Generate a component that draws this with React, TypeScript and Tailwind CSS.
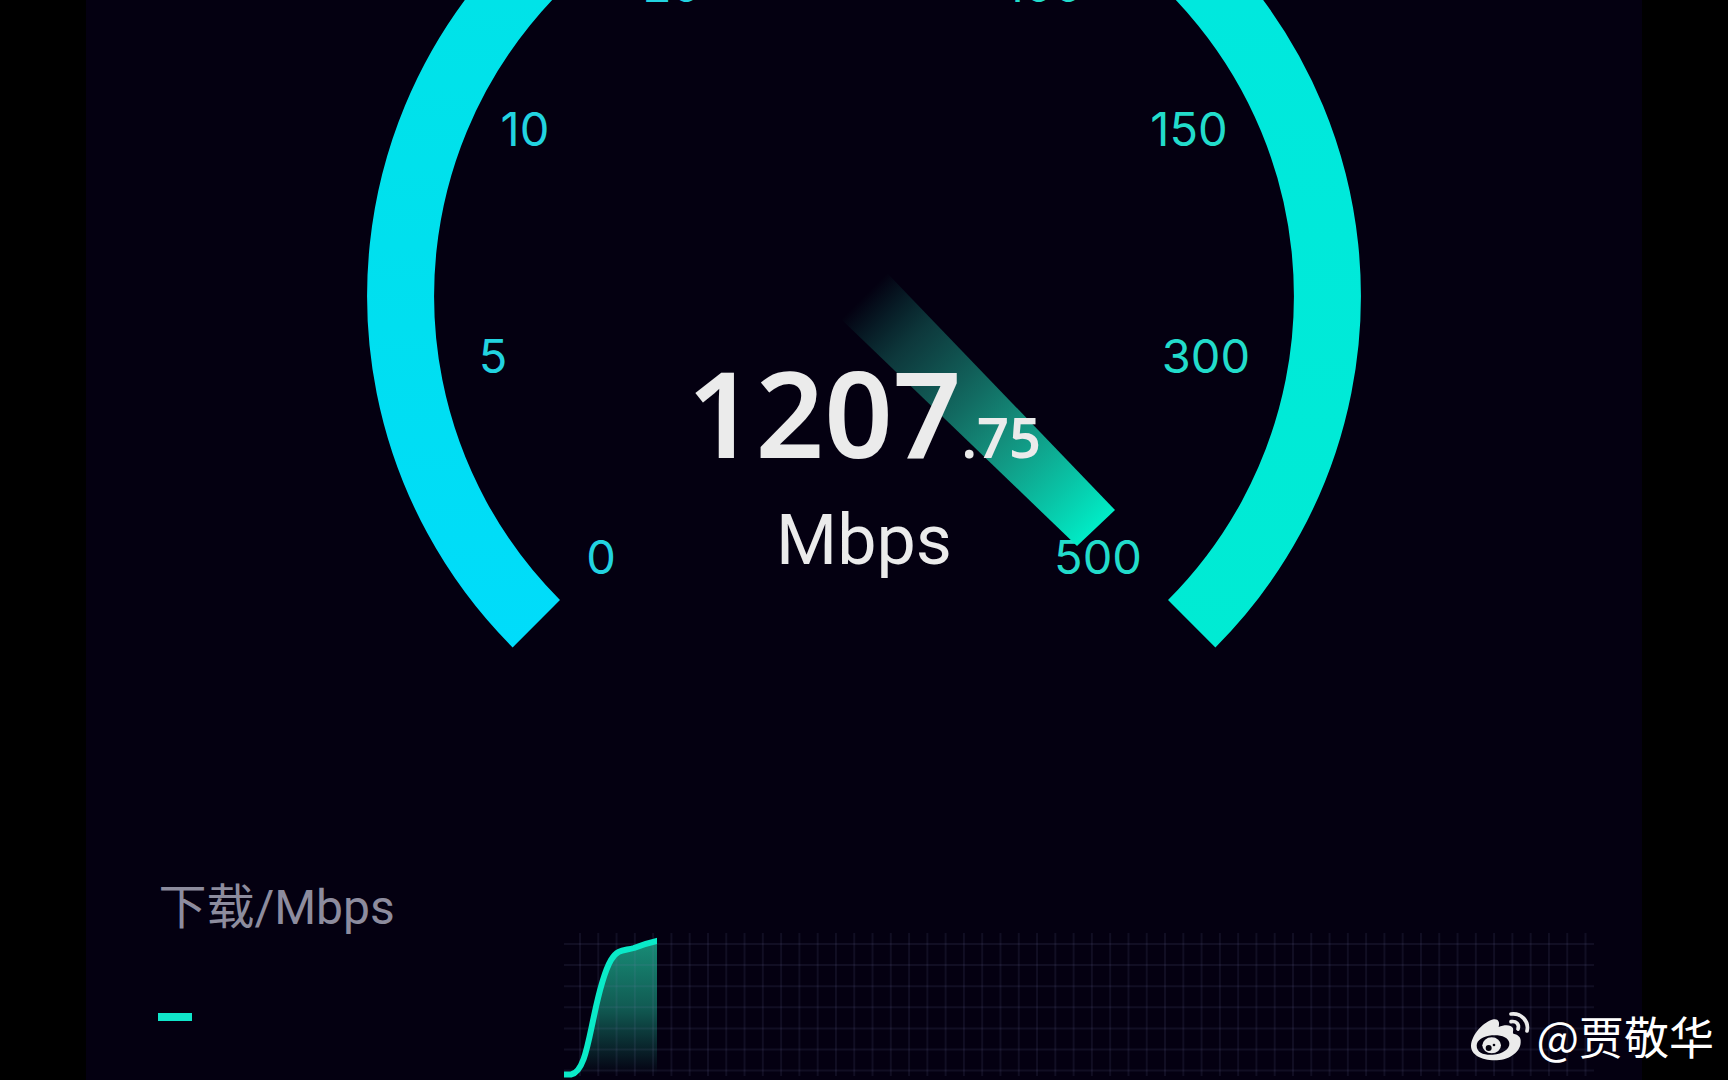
const ticks = [
  { label: "20", x: 305, y: 2 },
  { label: "100", x: 677, y: 2 },
  { label: "10", x: 158, y: 146 },
  { label: "150", x: 822, y: 146 },
  { label: "5", x: 126, y: 373 },
  { label: "300", x: 839, y: 373 },
  { label: "0", x: 234, y: 574 },
  { label: "500", x: 731, y: 574 },
];

const columns = Array.from({ length: 56 }, (_, i) => 16 + (i * 1005.5) / 55);
const rows = Array.from({ length: 7 }, (_, i) => 14 + i * 21.1);

const curve =
  "M0 144.5 H7 C20 142 24 113 30 86 C35 62 40 42 47 30 C54 18 61 21 70 18 C80 14 80 14 93 11";

function Gauge() {
  return (
    <section className="grid w-full max-w-[994px] justify-items-center">
      <svg
        viewBox="0 0 994 650"
        className="col-start-1 row-start-1 w-full overflow-visible"
        role="img"
        aria-label="Speed gauge"
      >
        <defs>
          <linearGradient id="ring-left" gradientUnits="userSpaceOnUse" x1="0" y1="650" x2="0" y2="0">
            <stop offset="0" stopColor="#00dcfb" />
            <stop offset="0.5" stopColor="#00dff0" />
            <stop offset="1" stopColor="#00e3e8" />
          </linearGradient>
          <linearGradient id="ring-right" gradientUnits="userSpaceOnUse" x1="0" y1="0" x2="0" y2="650">
            <stop offset="0" stopColor="#00e8de" />
            <stop offset="1" stopColor="#00ebd3" />
          </linearGradient>
          <linearGradient id="needle" gradientUnits="userSpaceOnUse" x1="497" y1="296" x2="729" y2="528">
            <stop offset="0" stopColor="#14b495" stopOpacity="0" />
            <stop offset="0.2" stopColor="#1e9c88" stopOpacity="0.36" />
            <stop offset="0.6" stopColor="#18b498" stopOpacity="0.78" />
            <stop offset="1" stopColor="#00ecc6" />
          </linearGradient>
        </defs>
        <g fill="none" strokeWidth="67">
          <path d="M169.3 623.7 A463.5 463.5 0 0 1 497 -167.5" stroke="url(#ring-left)" />
          <path d="M497 -167.5 A463.5 463.5 0 0 1 824.7 623.7" stroke="url(#ring-right)" />
        </g>
        {ticks.map((t) => (
          <text
            key={t.label}
            x={t.x}
            y={t.y}
            textAnchor="middle"
            className={
              t.x < 497
                ? "fill-[#22d3e0] font-['Inter',sans-serif] text-[47px]"
                : "fill-[#22dccb] font-['Inter',sans-serif] text-[47px]"
            }
          >
            {t.label}
          </text>
        ))}
        <path d="M520 273 L748 510 L710 546 L474 319 Z" fill="url(#needle)" />
      </svg>
      <div className="z-10 col-start-1 row-start-1 flex flex-col items-center pt-[340px] text-[#ebebeb]">
        <p className="flex items-baseline font-['Noto_Sans',sans-serif] font-semibold leading-[144px]">
          <span className="text-[120px]">1207</span>
          <span className="text-[56px]">.75</span>
        </p>
        <p className="font-['Roboto',sans-serif] text-[70px] leading-[64px]">Mbps</p>
      </div>
    </section>
  );
}

function DownloadChart() {
  return (
    <svg viewBox="0 0 1030 150" className="w-full" role="img" aria-label="Download speed over time">
      <defs>
        <linearGradient id="area" x1="0" y1="0" x2="0" y2="1">
          <stop offset="0" stopColor="#1a9c82" stopOpacity="0.9" />
          <stop offset="0.5" stopColor="#1a9c82" stopOpacity="0.58" />
          <stop offset="1" stopColor="#1a9c82" stopOpacity="0" />
        </linearGradient>
        <clipPath id="plot">
          <rect width="93" height="150" />
        </clipPath>
      </defs>
      <path d={`${curve} V144 H0 Z`} fill="url(#area)" />
      <g stroke="#8080b8" strokeOpacity="0.11" strokeWidth="2">
        {columns.map((x) => (
          <path key={x} d={`M${x} 3 V146`} />
        ))}
        {rows.map((y) => (
          <path key={y} d={`M0 ${y} H1030`} />
        ))}
      </g>
      <path d={`${curve} l6 -2`} fill="none" stroke="#0aeac8" strokeWidth="6" clipPath="url(#plot)" />
    </svg>
  );
}

function WeiboLogo() {
  return (
    <svg viewBox="34 34 180 156" className="w-[60px]" role="img" aria-label="Weibo">
      <path
        fill="#ebebeb"
        fillRule="evenodd"
        d="M37 142 C38 108 76 68 105 62 C119 60 124 70 120 85 C137 77 158 77 163 89 C165 96 161 102 164 105 C180 108 188 116 186 132 C184 164 146 185 108 185 C68 185 37 168 37 142 Z M54 141 C54 162 77 170 103 168 C132 166 154 151 152 133 C150 116 127 108 100 110 C73 112 54 125 54 141 Z"
      />
      <ellipse cx="99" cy="140" rx="28" ry="24" fill="#ebebeb" />
      <circle cx="90" cy="148" r="9" fill="#05030f" />
      <circle cx="106" cy="139" r="4" fill="#05030f" />
      <g fill="none" stroke="#ebebeb" strokeWidth="11" strokeLinecap="round">
        <path d="M157 46 C188 42 212 68 205 97" />
        <path d="M157 69 C173 66 183 78 178 91" />
      </g>
    </svg>
  );
}

export default function App() {
  return (
    <div className="relative flex h-screen min-h-[1080px] justify-center overflow-hidden bg-black">
      <main className="flex w-[90%] flex-col items-center bg-[#040011]">
        <Gauge />
        <section className="mt-[222px] flex w-full items-start pl-[72px] pr-12">
          <div className="flex flex-1 flex-col gap-[69px]">
            <h2 className="whitespace-nowrap font-['Roboto','Noto_Sans_CJK_SC',sans-serif] text-[48px] leading-[72px] text-[#8d8c9e]">
              下载/Mbps
            </h2>
            <div className="h-2 w-[34px] bg-[#10e6ca]" />
          </div>
          <div className="w-[1030px] shrink-0 pt-[58px]">
            <DownloadChart />
          </div>
        </section>
      </main>
      <div className="absolute bottom-3 right-3.5 flex items-center gap-1.5 text-white">
        <WeiboLogo />
        <span className="font-['Noto_Sans_CJK_SC',sans-serif] text-[45px] leading-[64px]">@贾敬华</span>
      </div>
    </div>
  );
}
